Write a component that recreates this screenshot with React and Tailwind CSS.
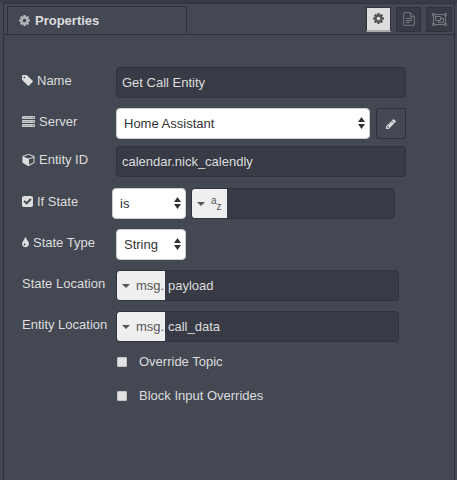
import React from 'react';

const PATHS = {
  cog: 'M1152 896q0-106-75-181t-181-75-181 75-75 181 75 181 181 75 181-75 75-181zm512-109v222q0 12-8 23t-20 13l-185 28q-19 54-39 91 35 50 107 138 10 12 10 25t-9 23q-27 37-99 108t-94 71q-12 0-26-9l-138-108q-44 23-91 38-16 136-29 186-7 28-36 28h-222q-14 0-24.5-8.5t-11.5-21.5l-28-184q-49-16-90-37l-141 107q-10 9-25 9-14 0-25-11-126-114-165-168-7-10-7-23 0-12 8-23 15-21 51-66.5t54-70.5q-27-50-41-99l-183-27q-13-2-21-12.5t-8-23.5v-222q0-12 8-23t19-13l186-28q14-46 39-92-40-57-107-138-10-12-10-24 0-10 9-23 26-36 98.5-107.5t94.5-71.5q13 0 26 10l138 107q44-23 91-38 16-136 29-186 7-28 36-28h222q14 0 24.5 8.5t11.5 21.5l28 184q49 16 90 37l142-107q9-9 24-9 13 0 25 10 129 119 165 170 7 8 7 22 0 12-8 23-15 21-51 66.5t-54 70.5q26 50 41 98l183 28q13 2 21 12.5t8 23.5z',
  tag: 'M576 448q0-53-37.5-90.500t-90.500-37.500-90.500 37.500-37.500 90.500 37.500 90.500 90.500 37.500 90.500-37.500 37.500-90.500zm1067 576q0 53-37 90l-491 492q-39 37-91 37-53 0-90-37l-715-716q-38-37-64.500-101t-26.500-117v-416q0-52 38-90t90-38h416q53 0 117 26.500t102 64.500l715 714q37 39 37 91z',
  cube: 'M896 1629l640-349v-636l-640 233v752zm-64-865l698-254-698-254-698 254zm832-252v768q0 35-18 65t-49 47l-704 384q-28 16-61 16t-61-16l-704-384q-31-17-49-47t-18-65v-768q0-40 23-73t61-47l704-256q22-8 44-8t44 8l704 256q38 14 61 47t23 73z',
  check: 'M813 1299l614-614q19-19 19-45t-19-45l-102-102q-19-19-45-19t-45 19l-467 467-211-211q-19-19-45-19t-45 19l-102 102q-19 19-19 45t19 45l358 358q19 19 45 19t45-19zm851-883v960q0 119-84.500 203.500t-203.500 84.500h-960q-119 0-203.500-84.500t-84.500-203.500v-960q0-119 84.500-203.500t203.500-84.500h960q119 0 203.500 84.500t84.500 203.500z',
  tint: 'M896 1152q0-36-20-69-1-1-15.500-22.500t-25.500-38-25-44-21-50.500q-4-16-21-16t-21 16q-7 23-21 50.500t-25 44-25.500 38-15.500 22.500q-20 33-20 69 0 53 37.500 90.500t90.500 37.500 90.500-37.500 37.500-90.500zm512-128q0 212-150 362t-362 150-362-150-150-362q0-145 81-275 6-9 62.500-90.500t101-151 99.500-178 83-201.500q9-30 34-47t51-17 51.500 17 33.500 47q28 93 83 201.500t99.500 178 101 151 62.500 90.500q81 127 81 275z',
  pencil: 'M491 1536l91-91-235-235-91 91v107h128v128h107zm523-928q0-22-22-22-10 0-17 7l-542 542q-7 7-7 17 0 22 22 22 10 0 17-7l542-542q7-7 7-17zm-54-192l416 416-832 832h-416v-416zm683 96q0 53-37 90l-166 166-416-416 166-165q36-38 90-38 53 0 91 38l235 234q37 39 37 91z',
};

function Glyph({ name, box = '128 128 1536 1536', className }) {
  return (
    <svg viewBox={box} className={className} fill="currentColor" aria-hidden="true">
      <path fillRule="evenodd" d={PATHS[name]} />
    </svg>
  );
}

function ServerIcon() {
  return (
    <svg viewBox="0 0 13 11" className="h-[11px] w-[13px]" aria-hidden="true">
      {[0, 4, 8].map((y) => (
        <g key={y}>
          <rect x="0" y={y} width="13" height="3" rx="0.4" fill="#c9cacc" />
          <rect x="1" y={y + 1} width="8" height="1" fill="#a2a5aa" />
          <rect x="10.500" y={y + 1} width="1.300" height="1" fill="#5b606a" />
        </g>
      ))}
    </svg>
  );
}

function FileIcon() {
  return (
    <svg viewBox="0 0 12 14" className="h-3.5 w-3" fill="none" stroke="currentColor" aria-hidden="true">
      <path d="M1 0.700h6.300l4 4v8.600H1a.3.3 0 0 1-.3-.3V1a.3.3 0 0 1 .3-.3z" />
      <path d="M7.300 0.700v4h4" />
      <path d="M3 6.500h6M3 8.500h6M3 10.500h4" />
    </svg>
  );
}

function GroupIcon() {
  return (
    <svg viewBox="0 0 15 13" className="h-[13px] w-[15px]" fill="none" stroke="currentColor" aria-hidden="true">
      <path d="M3 1.500h9M3 11.500h9M1.500 3v7M13.500 3v7" />
      <path d="M0.500 0.500h2v2h-2zM12.500 0.500h2v2h-2zM0.500 10.500h2v2h-2zM12.500 10.500h2v2h-2z" />
      <path d="M3.500 3.500h5v4h-5z" />
      <path d="M8.500 5.500h3v4h-5v-2" />
    </svg>
  );
}

function Row({ id, icon, label, className = 'mb-2.5', children }) {
  return (
    <div className={`flex items-center ${className}`}>
      <label htmlFor={id} className="flex w-[94px] shrink-0 items-center gap-1 pb-1 whitespace-nowrap">
        {icon}
        {label}
      </label>
      {children}
    </div>
  );
}

const FIELD =
  'h-[31px] w-full min-w-0 flex-1 rounded border border-[#2f323b] bg-[#383b45] px-[5px] text-[#dddddd] outline-none';

function Select({ id, value, label, className }) {
  return (
    <div className={`relative h-[31px] ${className}`}>
      <select
        id={id}
        aria-label={label}
        defaultValue={value}
        className="h-full w-full appearance-none rounded border border-[#cccccc] bg-white pr-5 pl-[7px] text-[#333333] outline-none"
      >
        <option>{value}</option>
      </select>
      <svg viewBox="0 0 7 12" className="pointer-events-none absolute top-[9px] right-[5px] h-3 w-[7px]" fill="#333333" aria-hidden="true">
        <path d="M3.500 0L7 5H0zM3.500 12L7 7H0z" />
      </svg>
    </div>
  );
}

function TypedInput({ id, value, label, type, prefixClass, className }) {
  return (
    <div className={`flex h-[31px] min-w-0 flex-1 overflow-hidden rounded border border-[#2f323b] bg-[#383b45] ${className}`}>
      <button type="button" aria-label={`${label} type`} className={`flex shrink-0 items-center bg-[#efefef] pl-[5px] text-[#555555] ${prefixClass}`}>
        <svg viewBox="0 0 8 4" className="h-1 w-2 shrink-0" fill="#555555" aria-hidden="true">
          <path d="M0 0h8L4 4z" />
        </svg>
        {type}
      </button>
      <input id={id} aria-label={label} defaultValue={value} className="w-full min-w-0 flex-1 bg-transparent px-[3px] text-[#dddddd] outline-none" />
    </div>
  );
}

function CheckRow({ id, label, className }) {
  return (
    <div className={`flex h-5 items-center gap-3 pl-[95px] ${className}`}>
      <input id={id} type="checkbox" className="h-2.5 w-2.5 appearance-none rounded-[1px] border border-[#c4c4c4] bg-[#e2e2e2]" />
      <label htmlFor={id}>{label}</label>
    </div>
  );
}

export default function App() {
  return (
    <div className="flex min-h-screen flex-col bg-[#444853] font-['Liberation_Sans',Arial,sans-serif] text-[13px] leading-5 text-[#dddddd]">
      <div className="h-[3px] bg-[#383b45]" />
      <main className="mr-0.5 ml-[3px] flex flex-1 flex-col border-x border-t border-[#2f323b]">
        <header className="flex h-[31px] items-stretch border-b border-[#2f323b] pr-0.5 pl-[3px]">
          <div className="mt-0.5 flex w-[180px] items-center gap-[5px] border-x border-t border-[#2f323b] pl-[11px]">
            <Glyph name="cog" className="h-[11px] w-[11px] text-[#b4b5b8]" />
            <h1 className="font-bold">Properties</h1>
          </div>
          <div className="ml-auto flex items-center gap-[5px]">
            <button type="button" aria-label="Properties" className="flex h-[25px] w-[25px] items-center justify-center border border-b-2 border-[#2f323b] border-b-[#aaaaaa] bg-[#dddddd] text-[#555555]">
              <Glyph name="cog" className="h-[11px] w-[11px]" />
            </button>
            <button type="button" aria-label="Description" className="flex h-[25px] w-[25px] items-center justify-center border border-[#2f323b] bg-[#383b45] text-[#777980]">
              <FileIcon />
            </button>
            <button type="button" aria-label="Appearance" className="flex h-[25px] w-[26px] items-center justify-center border border-[#2f323b] bg-[#383b45] text-[#777980]">
              <GroupIcon />
            </button>
          </div>
        </header>

        <form className="pt-8 pr-12 pl-[18px]">
          <Row id="name" label="Name" icon={<Glyph name="tag" className="h-[11px] w-[11px]" />}>
            <input id="name" defaultValue="Get Call Entity" className={FIELD} />
          </Row>
          <Row id="server" label="Server" className="mb-[7px]" icon={<ServerIcon />}>
            <Select id="server" value="Home Assistant" className="min-w-0 flex-1" />
            <button type="button" aria-label="Edit server" className="ml-1.5 flex h-[31px] w-[30px] items-center justify-center rounded-xs border border-[#2f323b]">
              <Glyph name="pencil" className="h-2.5 w-2.5" />
            </button>
          </Row>
          <Row id="entity" label="Entity ID" className="mb-[11px]" icon={<Glyph name="cube" box="0 0 1664 1792" className="h-[13px] w-[13px]" />}>
            <input id="entity" defaultValue="calendar.nick_calendly" className={FIELD} />
          </Row>
          <Row id="state" label="If State" icon={<Glyph name="check" className="h-[11px] w-[11px]" />}>
            <Select id="state" value="is" className="-ml-1 w-[74px] shrink-0" />
            <TypedInput
              id="statevalue"
              label="State value"
              value=""
              prefixClass="w-[35px]"
              className="mr-[11px] ml-[5px]"
              type={
                <span className="ml-1.5 flex text-[10px] leading-3">
                  <span className="pb-1.5">a</span>
                  <span className="pt-1.5">z</span>
                </span>
              }
            />
          </Row>
          <Row id="statetype" label="State Type" icon={<Glyph name="tint" box="384 128 1024 1408" className="h-[11px] w-[7px]" />}>
            <Select id="statetype" value="String" className="w-[70px]" />
          </Row>
          <Row id="stateloc" label="State Location">
            <TypedInput id="stateloc" label="State Location" value="payload" prefixClass="w-12" className="mr-[7px]" type={<span className="ml-1.5">msg.</span>} />
          </Row>
          <Row id="entityloc" label="Entity Location">
            <TypedInput id="entityloc" label="Entity Location" value="call_data" prefixClass="w-12" className="mr-[7px]" type={<span className="ml-1.5">msg.</span>} />
          </Row>
          <CheckRow id="topic" label="Override Topic" className="mb-3.5" />
          <CheckRow id="block" label="Block Input Overrides" className="mb-5" />
        </form>
      </main>
    </div>
  );
}
